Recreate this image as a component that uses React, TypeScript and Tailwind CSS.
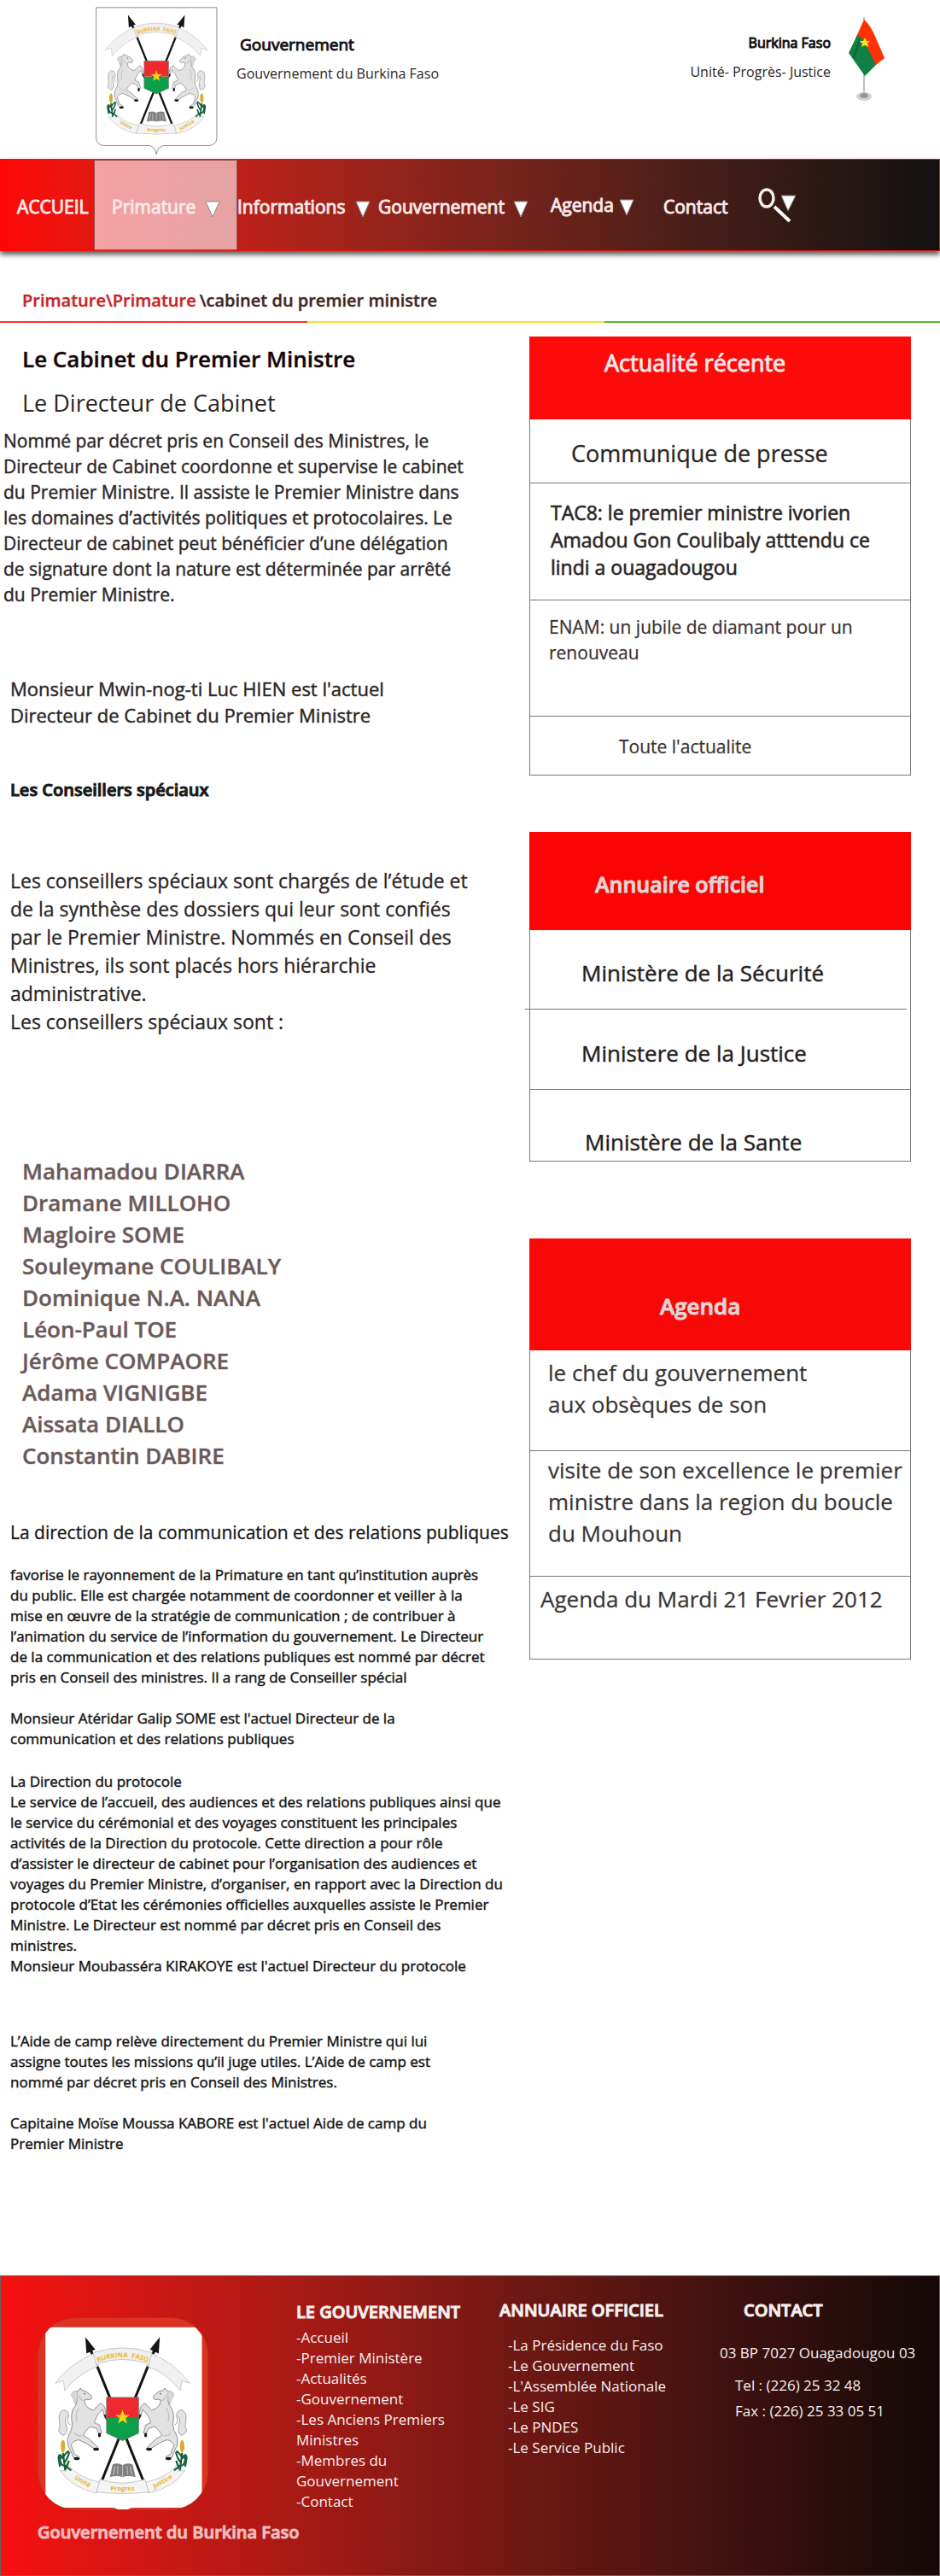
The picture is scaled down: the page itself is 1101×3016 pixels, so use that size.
import type { ReactNode } from 'react'

const ministers = [
  'Mahamadou DIARRA',
  'Dramane MILLOHO',
  'Magloire SOME',
  'Souleymane COULIBALY',
  'Dominique N.A. NANA',
  'Léon-Paul TOE',
  'Jérôme COMPAORE',
  'Adama VIGNIGBE',
  'Aissata DIALLO',
  'Constantin DABIRE',
]

const governmentLinks = [
  '-Accueil',
  '-Premier Ministère',
  '-Actualités',
  '-Gouvernement',
  '-Les Anciens Premiers\nMinistres',
  '-Membres du\nGouvernement',
  '-Contact',
]

const directoryLinks = [
  '-La Présidence du Faso',
  '-Le Gouvernement',
  "-L'Assemblée Nationale",
  '-Le SIG',
  '-Le PNDES',
  '-Le Service Public',
]

/* One side of the coat of arms: horse, ear of millet and ribbon tail. */
function Supporter() {
  return (
    <g>
      <path
        d="M174 98 Q112 122 69 178 L91 171 L95 198 Q130 152 184 132 Z"
        fill="#f1f1f1"
        stroke="#c4c4c4"
        strokeWidth="2"
      />
      <path
        d="M82 412 Q112 458 178 472 L190 444 Q130 432 100 394 L98 414 Z"
        fill="#f4f4f4"
        stroke="#c4c4c4"
        strokeWidth="2"
      />
      <path d="M178 472 L192 470 L188 458 Z" fill="#b5b5b5" />
      <path
        d="M110 290 Q98 284 105 268 Q106 250 91 250 Q77 255 80 277 Q85 291 78 305 Q84 318 93 318 Q104 308 99 292 Q94 280 98 268"
        fill="#e4e4e4"
        stroke="#9a9a9a"
        strokeWidth="2"
      />
      <path
        d="M118 213 Q121 200 133 197 L137 191 L141 197 Q152 198 159 205 L167 213 Q169 220 162 222 L150 221 Q146 228 151 237 Q160 249 172 250 L190 232 Q201 235 204 250 L208 270 L202 270 L196 248 L184 262 Q176 276 174 284 L188 290 L194 312 L187 316 L181 300 L164 294 Q150 304 144 318 L160 327 L183 349 L181 356 L172 352 L150 338 L132 330 Q116 332 112 344 L121 368 L133 375 L130 382 L118 377 L104 345 Q98 325 112 305 Q117 290 113 272 Q112 250 124 238 Q130 228 127 212 Z"
        fill="#e2e2e2"
        stroke="#808080"
        strokeWidth="2"
        strokeLinejoin="round"
      />
      <path d="M132 245 Q122 262 128 282 M150 225 Q136 226 134 212 M120 310 Q128 322 140 318" fill="none" stroke="#c2c2c2" strokeWidth="3" />
      <path d="M113 214 Q110 202 124 198 L130 205 Q130 222 122 236" fill="#d6d6d6" stroke="#9a9a9a" strokeWidth="1" />
      <circle cx="148" cy="206" r="2" fill="#555" />
      <ellipse cx="188" cy="317" rx="4" ry="6" fill="#1a1a1a" />
      <ellipse cx="179" cy="355" rx="8" ry="4" fill="#1a1a1a" />
      <ellipse cx="127" cy="380" rx="8" ry="4" fill="#1a1a1a" />
      <path d="M202 262 L208 276" stroke="#1a1a1a" strokeWidth="5" />
      <path
        d="M90 365 L96 412 M90 380 Q80 362 78 378 L82 402 M93 392 Q104 378 107 362 M92 374 Q100 362 106 360 M96 408 Q104 396 106 386 M84 374 Q78 392 92 400 M96 400 L112 412"
        fill="none"
        stroke="#16603f"
        strokeWidth="5"
      />
      <ellipse cx="90" cy="347" rx="6" ry="17" fill="#dcab2c" />
    </g>
  )
}

function Arms({ id }: { id: string }) {
  return (
    <g>
      <g stroke="#151515" strokeWidth="7">
        <path d="M156 68 L305 438" />
        <path d="M344 68 L195 438" />
      </g>
      <path d="M150 54 L177 88 L169 90 L172 106 L162 94 L153 98 Z" fill="#151515" />
      <path d="M350 54 L323 88 L331 90 L328 106 L338 94 L347 98 Z" fill="#151515" />
      <Supporter />
      <g transform="translate(500 0) scale(-1 1)">
        <Supporter />
      </g>
      <path
        d="M171 96 Q250 70 329 96 L320 130 L312 124 Q250 104 188 124 L180 130 Z"
        fill="#f0f0f0"
        stroke="#bdbdbd"
        strokeWidth="2"
      />
      <path id={`${id}-top`} d="M183 122 Q250 95 318 122" fill="none" />
      <text fill="#efb92a" fontFamily="Open Sans, sans-serif" fontWeight="700" fontSize="18">
        <textPath href={`#${id}-top`} startOffset="50%" textAnchor="middle">
          {'BURKINA \u00a0FASO'}
        </textPath>
      </text>
      <path d="M207 216 H293 V271 H207 Z" fill="#ee2a2e" />
      <path d="M207 271 H293 V312 L250 332 L207 312 Z" fill="#0b9f4a" />
      <path d="M207 216 H293 V312 L250 332 L207 312 Z" fill="none" stroke="#777" strokeWidth="2" />
      <path
        d="M250 249 L255 263 L269 263 L258 272 L262 286 L250 278 L238 286 L242 272 L231 263 L245 263 Z"
        fill="#fcd116"
      />
      <path d="M223 396 Q238 390 250 398 Q262 390 277 396 L285 430 Q264 424 250 430 Q236 424 216 430 Z" fill="#808080" />
      <path d="M250 398 V431 M230 401 L225 424 M238 400 L236 423 M262 400 L264 423 M270 401 L275 424" stroke="#d0d0d0" strokeWidth="2" fill="none" />
      <path
        d="M190 436 Q250 456 310 436 L320 470 Q250 478 180 470 Z"
        fill="#f4f4f4"
        stroke="#bdbdbd"
        strokeWidth="2"
      />
      <g fill="#e9b52c" fontFamily="Open Sans, sans-serif" fontWeight="700" fontSize="17" textAnchor="middle">
        <text x="250" y="465">Progrès</text>
        <text transform="translate(140 446) rotate(30)">Unité</text>
        <text transform="translate(360 446) rotate(-30)">Justice</text>
      </g>
    </g>
  )
}

function CoatOfArms() {
  return (
    <svg viewBox="36 26 430 522" className="h-[174px] w-[143px] shrink-0" role="img" aria-label="Armoiries du Burkina Faso">
      <path
        d="M38 28 H463 V488 Q460 512 436 514 H276 Q254 518 250 545 Q246 518 226 514 H66 Q40 512 38 488 Z"
        fill="#fff"
        stroke="#8c8c8c"
        strokeWidth="3"
      />
      <Arms id="header" />
    </svg>
  )
}

function TableFlag() {
  return (
    <svg viewBox="994 20 44 100" className="h-[100px] w-11 shrink-0" role="img" aria-label="Drapeau du Burkina Faso">
      <path d="M1013 20 V112" stroke="#a5aba5" strokeWidth="1.5" />
      <path d="M1013 23 Q1019 28 1024 38 L1037 68 L1027 76 L1003 45 Z" fill="#ff3105" />
      <path d="M1005 41 Q1012 44 1016 54 L1027 76 L1014 89 L995 62 Z" fill="#118044" />
      <path d="M1008 46 L1001 68" stroke="#0a6535" strokeWidth="2" />
      <path d="M1014 44 L1016 48 L1020 48 L1017 51 L1018 55 L1014 53 L1010 55 L1011 51 L1008 48 L1012 48 Z" fill="#fbe21c" />
      <ellipse cx="1013" cy="113" rx="9" ry="5" fill="#cdd5cb" />
      <ellipse cx="1013" cy="112" rx="5" ry="3" fill="#8f998f" />
    </svg>
  )
}

function Caret() {
  return (
    <svg viewBox="0 0 18 20" className="mt-1 h-5 w-[18px] shrink-0" aria-hidden="true">
      <path d="M1 1 H17 L9 19 Z" fill="#fff" stroke="#8a8a8a" strokeWidth="1" />
    </svg>
  )
}

function Card({ children }: { children: ReactNode }) {
  return <section className="border border-t-0 border-[#777]">{children}</section>
}

function Divider() {
  return <div className="h-px bg-[#777]" />
}

export default function App() {
  return (
    <div className="min-h-screen bg-white font-['Open_Sans',sans-serif] text-[#2a2424]">
      <header>
        <div className="flex h-[186px] items-start pl-28 pr-16">
          <div className="pt-2">
            <CoatOfArms />
          </div>
          <div className="pl-[22px] pt-10">
            <p className="pl-1 text-[19px] leading-6 text-[#151515] [-webkit-text-stroke:1px_#151515]">Gouvernement</p>
            <p className="mt-2.5 text-[16px] leading-6">Gouvernement du Burkina Faso</p>
          </div>
          <div className="ml-auto pt-[38px] text-right">
            <p className="text-[16px] leading-6 text-[#151515] [-webkit-text-stroke:1px_#151515]">Burkina Faso</p>
            <p className="mt-2.5 text-[16px] leading-6">Unité- Progrès- Justice</p>
          </div>
          <div className="pl-5 pt-5">
            <TableFlag />
          </div>
        </div>

        <nav className="flex h-[108px] border border-l-0 border-[#ee1010] bg-linear-to-r from-[#ff0606] to-[#111] text-[21px] text-[#f8e8e8] shadow-[0_4px_6px_#000a] [-webkit-text-stroke:1px_#f8e8e8]">
          <a href="#accueil" className="flex w-[110px] shrink-0 items-center pl-5 pt-1.5">
            ACCUEIL
          </a>
          <button type="button" className="flex w-[168px] shrink-0 items-center gap-[11px] border border-[#a04a4a] bg-linear-to-r from-[#f4a1a3] to-[#e5a3a3] pl-5 pt-1.5">
            Primature
            <Caret />
          </button>
          <button type="button" className="flex w-[165px] shrink-0 items-center gap-3 pt-1.5">
            Informations
            <Caret />
          </button>
          <button type="button" className="flex w-[202px] shrink-0 items-center gap-2.5 pt-1.5">
            Gouvernement
            <Caret />
          </button>
          <button type="button" className="flex w-[132px] shrink-0 items-center gap-1.5 pt-0.5">
            Agenda
            <Caret />
          </button>
          <a href="#contact" className="flex w-[111px] shrink-0 items-center pt-1.5">
            Contact
          </a>
          <button type="button" aria-label="Rechercher" className="flex items-center pt-0.5">
            <svg viewBox="888 221 46 42" className="h-[42px] w-[46px]" aria-hidden="true">
              <path d="M915 230 H932 L923 248 Z" fill="#fff" stroke="#777" strokeWidth="1" />
              <ellipse cx="898" cy="233" rx="8" ry="10" fill="none" stroke="#f4f0f0" strokeWidth="3.5" />
              <path d="M907 243 L925 260" stroke="#fff" strokeWidth="4" />
            </svg>
          </button>
        </nav>
      </header>

      <nav aria-label="Fil d'Ariane" className="flex gap-1 pb-2.5 pl-[26px] pt-11 text-[20px] font-semibold leading-7">
        <a href="#primature" className="text-[#c62424] [-webkit-text-stroke:1px_#c6242460]">
          Primature\Primature
        </a>
        <span className="text-[#402626] [-webkit-text-stroke:1px_#40262660]">\cabinet du premier ministre</span>
      </nav>
      <div className="grid h-0.5 grid-cols-[360fr_348fr_393fr]">
        <div className="bg-[#f33]" />
        <div className="bg-[#f2e22e]" />
        <div className="bg-[#5cb82c]" />
      </div>

      <main className="grid grid-cols-[620fr_481fr] items-start">
        <article className="whitespace-pre-line pb-[142px]">
          <h1 className="mt-6 pl-[26px] text-[26px] font-semibold leading-9 text-[#140505] [-webkit-text-stroke:1px_#14050560]">Le Cabinet du Premier Ministre</h1>
          <h2 className="mt-4 pl-[26px] text-[27px] leading-9">Le Directeur de Cabinet</h2>
          <p className="mt-[11px] pl-1 text-[21px] leading-[30px] [-webkit-text-stroke:1px_#2a242470]">
            {`Nommé par décret pris en Conseil des Ministres, le
Directeur de Cabinet coordonne et supervise le cabinet
du Premier Ministre. Il assiste le Premier Ministre dans
les domaines d’activités politiques et protocolaires. Le
Directeur de cabinet peut bénéficier d’une délégation
de signature dont la nature est déterminée par arrêté
du Premier Ministre.`}
          </p>
          <p className="mt-20 pl-3 text-[22px] leading-[31px] [-webkit-text-stroke:1px_#2a242470]">
            {`Monsieur Mwin-nog-ti Luc HIEN est l'actuel
Directeur de Cabinet du Premier Ministre`}
          </p>
          <h2 className="mt-[57px] pl-3 text-[20px] font-semibold leading-[30px] text-[#1a1a1a] [-webkit-text-stroke:1px_#1a1a1a]">Les Conseillers spéciaux</h2>
          <p className="mt-[75px] pl-3 text-[23px] leading-[33px] [-webkit-text-stroke:1px_#2a242450]">
            {`Les conseillers spéciaux sont chargés de l’étude et
de la synthèse des dossiers qui leur sont confiés
par le Premier Ministre. Nommés en Conseil des
Ministres, ils sont placés hors hiérarchie
administrative.
Les conseillers spéciaux sont :`}
          </p>
          <ul className="mt-[140px] pl-[26px] text-[26px] font-semibold leading-[37px] text-[#6b5959] [-webkit-text-stroke:1px_#6b595960]">
            {ministers.map((name) => (
              <li key={name}>{name}</li>
            ))}
          </ul>
          <h2 className="mt-14 pl-3 text-[21px] leading-[30px] text-[#151515] [-webkit-text-stroke:1px_#15151550]">
            La direction de la communication et des relations publiques
          </h2>
          <div className="pl-3 text-[17px] leading-6 text-[#111] [-webkit-text-stroke:1px_#11111170]">
            <p className="mt-[23px]">
              {`favorise le rayonnement de la Primature en tant qu’institution auprès
du public. Elle est chargée notamment de coordonner et veiller à la
mise en œuvre de la stratégie de communication ; de contribuer à
l’animation du service de l’information du gouvernement. Le Directeur
de la communication et des relations publiques est nommé par décret
pris en Conseil des ministres. Il a rang de Conseiller spécial`}
            </p>
            <p className="mt-6">
              {`Monsieur Atéridar Galip SOME est l'actuel Directeur de la
communication et des relations publiques`}
            </p>
            <h3 className="mt-[26px]">La Direction du protocole</h3>
            <p>
              {`Le service de l’accueil, des audiences et des relations publiques ainsi que
le service du cérémonial et des voyages constituent les principales
activités de la Direction du protocole. Cette direction a pour rôle
d’assister le directeur de cabinet pour l’organisation des audiences et
voyages du Premier Ministre, d’organiser, en rapport avec la Direction du
protocole d’Etat les cérémonies officielles auxquelles assiste le Premier
Ministre. Le Directeur est nommé par décret pris en Conseil des
ministres.
Monsieur Moubasséra KIRAKOYE est l'actuel Directeur du protocole`}
            </p>
            <p className="mt-16">
              {`L’Aide de camp relève directement du Premier Ministre qui lui
assigne toutes les missions qu’il juge utiles. L’Aide de camp est
nommé par décret pris en Conseil des Ministres.`}
            </p>
            <p className="mt-6">
              {`Capitaine Moïse Moussa KABORE est l'actuel Aide de camp du
Premier Ministre`}
            </p>
          </div>
        </article>

        <aside className="mr-[34px] mt-4">
          <Card>
            <h2 className="-mx-px h-[97px] bg-[#ff0a0a] pl-[88px] pt-[13px] text-[27px] leading-9 text-[#f6e8e8] [-webkit-text-stroke:1px_#f6e8e8]">
              Actualité récente
            </h2>
            <h3 className="h-[74px] pl-12 pt-[22px] text-[27px] leading-9 [-webkit-text-stroke:1px_#2a242450]">Communique de presse</h3>
            <Divider />
            <p className="h-[136px] whitespace-pre-line pl-6 pt-[18px] text-[23px] leading-8 [-webkit-text-stroke:1px_#2a2424a0]">
              {`TAC8: le premier ministre ivorien
Amadou Gon Coulibaly atttendu ce
lindi a ouagadougou`}
            </p>
            <Divider />
            <p className="h-[135px] whitespace-pre-line pl-[22px] pt-4 text-[21px] leading-[30px] text-[#3c3030] [-webkit-text-stroke:1px_#3c303040]">
              {`ENAM: un jubile de diamant pour un
renouveau`}
            </p>
            <Divider />
            <a href="#actualite" className="block h-[68px] pl-[104px] pt-5 text-[21px] leading-[30px] text-[#3c3030] [-webkit-text-stroke:1px_#3c303040]">
              Toute l'actualite
            </a>
          </Card>

          <div className="mt-[66px]">
            <Card>
              <h2 className="-mx-px h-[115px] bg-[#fd0404] pl-[77px] pt-[43px] text-[25px] font-semibold leading-9 text-[#e2d4d4] [-webkit-text-stroke:1px_#e2d4d4]">
                Annuaire officiel
              </h2>
              <p className="h-[92px] pl-[60px] pt-8 text-[26px] leading-9 text-[#1f1c1c] [-webkit-text-stroke:1px_#1f1c1c70]">Ministère de la Sécurité</p>
              <div className="-ml-1.5 mr-1">
                <Divider />
              </div>
              <p className="h-[93px] pl-[60px] pt-[33px] text-[26px] leading-9 text-[#1f1c1c] [-webkit-text-stroke:1px_#1f1c1c70]">Ministere de la Justice</p>
              <Divider />
              <p className="h-[83px] pl-[64px] pt-[43px] text-[26px] leading-9 text-[#1f1c1c] [-webkit-text-stroke:1px_#1f1c1c70]">Ministère de la Sante</p>
            </Card>
          </div>

          <div className="mt-[90px]">
            <Card>
              <h2 className="-mx-px h-[131px] bg-[#f90808] pl-[153px] pt-[61px] text-[26px] font-semibold leading-9 text-[#e2d4d4] [-webkit-text-stroke:1px_#e2d4d4]">
                Agenda
              </h2>
              <p className="h-[117px] whitespace-pre-line pl-[21px] pt-2 text-[26px] leading-[37px] text-[#383434] [-webkit-text-stroke:1px_#38343440]">
                {`le chef du gouvernement
aux obsèques de son`}
              </p>
              <Divider />
              <p className="h-[146px] whitespace-pre-line pl-[21px] pt-1 text-[26px] leading-[37px] text-[#383434] [-webkit-text-stroke:1px_#38343440]">
                {`visite de son excellence le premier
ministre dans la region du boucle
du Mouhoun`}
              </p>
              <Divider />
              <p className="h-[96px] pl-3 pt-2 text-[26px] leading-[37px] text-[#383434] [-webkit-text-stroke:1px_#38343440]">
                Agenda du Mardi 21 Fevrier 2012
              </p>
            </Card>
          </div>
        </aside>
      </main>

      <footer className="grid min-h-[352px] grid-cols-[346fr_238fr_258fr_257fr] border border-[#6b6060] bg-linear-to-r from-[#f70f0f] to-[#140808] text-[17px] leading-6 text-[#f8efef]">
        <div className="min-w-0 pl-[43px] pt-12">
          <div className="flex h-[226px] w-[200px] justify-center overflow-hidden rounded-[44px] border border-[#c02a1c] bg-[#dc3423] pt-2.5">
            <svg viewBox="36 26 430 518" className="h-[226px] w-[188px] shrink-0" role="img" aria-label="Armoiries du Burkina Faso">
              <path d="M43 28 H463 V512 H276 Q254 516 250 545 Q246 516 226 512 H43 Z" fill="#fff" />
              <Arms id="footer" />
            </svg>
          </div>
          <p className="mt-3 whitespace-nowrap text-[20px] font-semibold leading-7 text-[#f0bcbc] [-webkit-text-stroke:1px_#f0bcbc]">
            Gouvernement du Burkina Faso
          </p>
        </div>

        <div className="pt-7">
          <h2 className="text-[20px] font-semibold leading-7 [-webkit-text-stroke:1px_#f8efef]">LE GOUVERNEMENT</h2>
          <ul className="mt-1 whitespace-pre-line">
            {governmentLinks.map((label) => (
              <li key={label}>
                <a href="#gouvernement">{label}</a>
              </li>
            ))}
          </ul>
        </div>

        <div className="pt-[26px]">
          <h2 className="text-[20px] font-semibold leading-7 [-webkit-text-stroke:1px_#f8efef]">ANNUAIRE OFFICIEL</h2>
          <ul className="mt-[15px] pl-2.5">
            {directoryLinks.map((label) => (
              <li key={label}>
                <a href="#annuaire">{label}</a>
              </li>
            ))}
          </ul>
        </div>

        <div className="pt-[26px]">
          <h2 className="pl-7 text-[20px] font-semibold leading-7 [-webkit-text-stroke:1px_#f8efef]">CONTACT</h2>
          <p className="mt-6">03 BP 7027 Ouagadougou 03</p>
          <p className="mt-3.5 pl-[18px]">Tel : (226) 25 32 48</p>
          <p className="mt-1.5 pl-[18px]">Fax : (226) 25 33 05 51</p>
        </div>
      </footer>
    </div>
  )
}
